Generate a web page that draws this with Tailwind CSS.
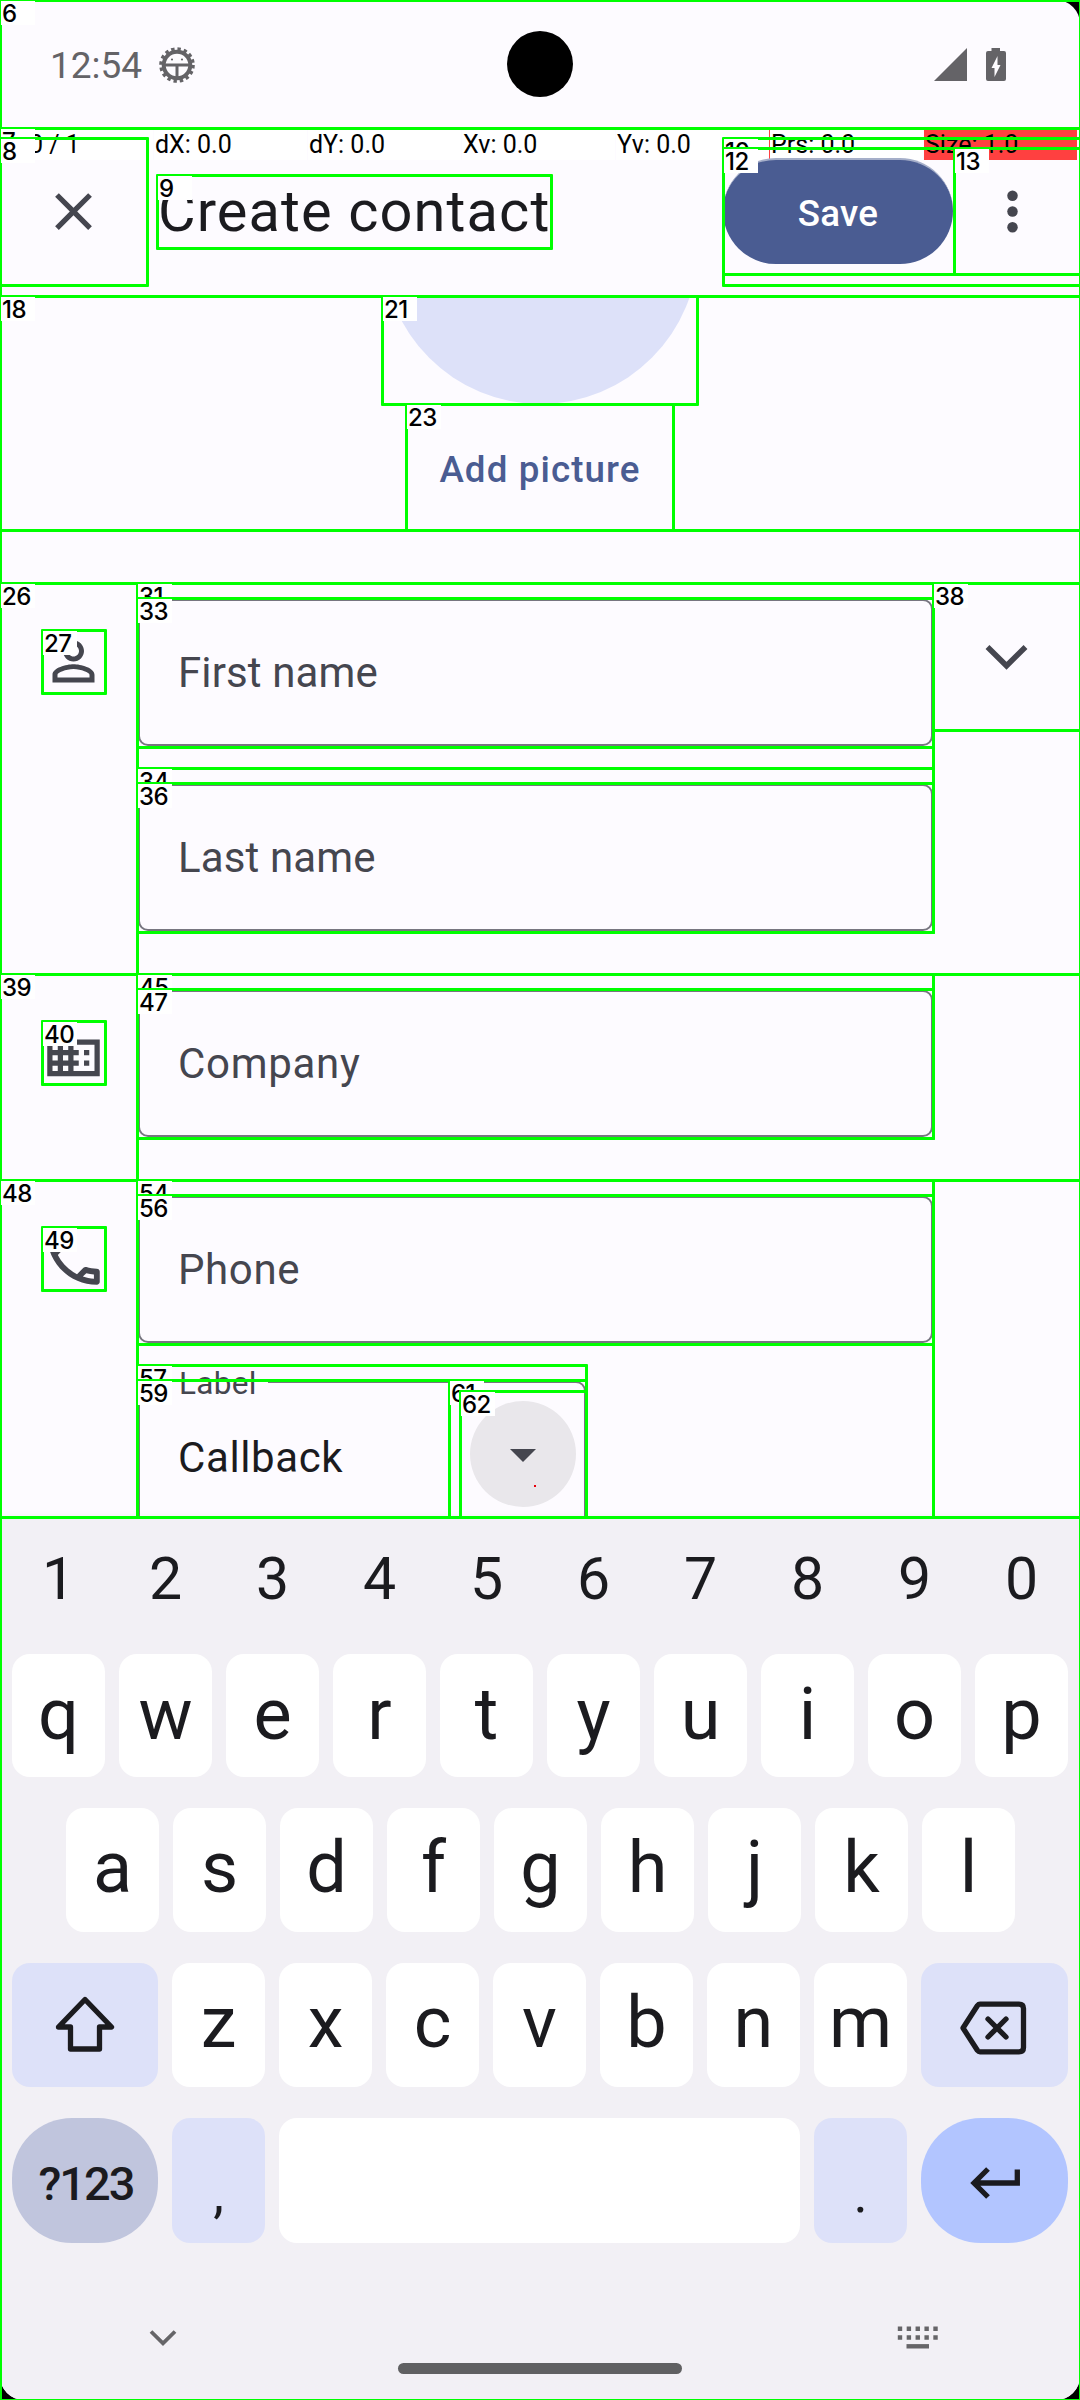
<!DOCTYPE html>
<html lang="en">
<head>
<meta charset="utf-8">
<title>Create contact</title>
<script src="https://cdn.jsdelivr.net/npm/@tailwindcss/browser@4"></script>
</head>
<body class="bg-black font-[Roboto,sans-serif] text-[#1b1b1f]">
<div class="relative w-[1080px] h-[2400px] overflow-hidden">
<div class="flex flex-col w-[1080px] h-[2400px] overflow-hidden rounded-[24px] bg-[#fdfbff]">

  <!-- Status bar -->
  <header class="relative flex h-[129px] shrink-0 items-center justify-between pl-[50px] pr-[74px] text-[#646367]">
    <div class="flex items-center gap-[17px]">
      <span class="w-[92px] whitespace-nowrap text-[37px] leading-[40px] pt-[3px]">12:54</span>
      <svg class="size-9" viewBox="-18 -18 36 36">
        <circle r="13.3" fill="none" stroke="currentColor" stroke-width="4"/>
        <circle r="16.2" fill="none" stroke="currentColor" stroke-width="3.2" stroke-dasharray="3.4 2.96"/>
        <path d="M-12 0H12M0 0V13" stroke="currentColor" stroke-width="3"/>
        <circle cx="-5" cy="-5.5" r="1.1" fill="currentColor"/><circle cx="5" cy="-5.5" r="1.1" fill="currentColor"/>
      </svg>
    </div>
    <div class="absolute left-[507px] top-[31px] size-[66px] rounded-full bg-black"></div>
    <div class="flex items-center gap-[19px]">
      <svg class="h-[33px] w-[33px]" viewBox="0 0 33 33"><path d="M0 33L33 0V33Z" fill="currentColor"/></svg>
      <svg class="h-[33px] w-5" viewBox="0 0 20 33"><path d="M5.500 0h8.500v3h4q2 0 2 2v26q0 2-2 2H2q-2 0-2-2V5q0-2 2-2h3.500z" fill="currentColor"/><path d="M11.500 8v9h3L8.500 29v-9H5.500z" fill="#fdfbff"/></svg>
    </div>
  </header>

  <!-- Pointer readout -->
  <div class="grid h-[31px] shrink-0 grid-cols-[repeat(7,153px)] gap-px text-[25px] leading-[32px] text-black *:h-[31px] *:bg-white *:pl-px *:whitespace-pre">
    <div>P: 0 / 1</div><div>dX: 0.0</div><div>dY: 0.0</div><div>Xv: 0.0</div><div>Yv: 0.0</div>
    <div class="shadow-[-1px_0_0_#ff4040]">Prs: 0.0</div><div class="bg-[#ff4040]!">Size: 1.0</div>
  </div>

  <!-- App bar -->
  <div class="flex h-[137px] shrink-0 items-start pl-[42px] text-[#45464f]">
    <svg class="mt-5 size-[63px]" viewBox="0 0 24 24" fill="currentColor"><path d="M19 6.410L17.590 5 12 10.590 6.410 5 5 6.410 10.590 12 5 17.590 6.410 19 12 13.410 17.590 19 19 17.590 13.410 12z"/></svg>
    <h1 class="ml-[53px] mt-[17px] w-[565px] whitespace-nowrap text-[57.750px] leading-[68px] tracking-[1.100px] text-[#1b1b1f]">Create contact</h1>
    <div class="-mt-[2px] flex h-[106px] w-[230px] items-center justify-center rounded-full border-t-2 border-[#a5aec9] bg-[#4a5c92] pt-[3px] text-[36.750px] font-medium tracking-[0.300px] text-white">Save</div>
    <svg class="ml-[28px] mt-5 size-[63px]" viewBox="0 0 24 24" fill="currentColor"><circle cx="12" cy="6" r="2"/><circle cx="12" cy="12" r="2"/><circle cx="12" cy="18" r="2"/></svg>
  </div>

  <!-- Photo -->
  <section class="flex h-[287px] shrink-0 flex-col items-center">
    <div class="flex h-[107px] items-end overflow-hidden"><div class="size-[315px] shrink-0 rounded-full bg-[#dde1f9]"></div></div>
    <div class="mt-[42px] text-[36.750px] leading-[48px] font-medium tracking-[1.100px] text-[#4a5c92]">Add picture</div>
  </section>

  <!-- Form -->
  <main class="flex h-[934px] shrink-0 flex-col overflow-hidden pt-[15px] text-[42px] text-[#45464f]">
    <section class="flex h-[391px] shrink-0 pl-[42px]">
      <svg class="mt-[31px] size-[63px]" viewBox="0 0 24 24" fill="currentColor"><path d="M12 5.900c1.160 0 2.100.94 2.100 2.100s-.94 2.100-2.100 2.100S9.900 9.160 9.900 8s.94-2.100 2.100-2.100m0 9c2.970 0 6.100 1.460 6.100 2.100v1.100H5.900V17c0-.64 3.130-2.100 6.100-2.100M12 4C9.790 4 8 5.790 8 8s1.790 4 4 4 4-1.790 4-4-1.790-4-4-4zm0 9c-2.670 0-8 1.340-8 4v3h16v-3c0-2.660-5.330-4-8-4z"/></svg>
      <div class="ml-[33px] flex w-[795px] flex-col gap-[38px]">
        <div class="flex h-[147px] items-center rounded-[10px] border-2 border-[#777680] pl-[38px] tracking-[0.120px]">First name</div>
        <div class="flex h-[147px] items-center rounded-[10px] border-2 border-[#777680] pl-[38px] tracking-[0.120px]">Last name</div>
      </div>
      <svg class="ml-[52px] mt-[45px] h-[26px] w-[43px]" viewBox="0 0 43 26" fill="none" stroke="currentColor" stroke-width="5.500"><path d="M2.500 3L21.500 21.800 40.500 3"/></svg>
    </section>
    <section class="flex h-[206px] shrink-0 pl-[42px]">
      <svg class="mt-[31px] size-[63px]" viewBox="0 0 24 24" fill="currentColor"><path d="M12 7V3H2v18h20V7H12zM6 19H4v-2h2v2zm0-4H4v-2h2v2zm0-4H4V9h2v2zm0-4H4V5h2v2zm4 12H8v-2h2v2zm0-4H8v-2h2v2zm0-4H8V9h2v2zm0-4H8V5h2v2zm10 12h-8v-2h2v-2h-2v-2h2v-2h-2V9h8v10zm-2-8h-2v2h2v-2zm0 4h-2v2h2v-2z"/></svg>
      <div class="ml-[33px] flex h-[147px] w-[795px] items-center rounded-[10px] border-2 border-[#777680] pl-[38px] tracking-[0.700px]">Company</div>
    </section>
    <section class="flex shrink-0 pl-[42px]">
      <svg class="mt-[31px] size-[63px]" viewBox="1.200 1.200 21.600 21.600" fill="currentColor"><path d="M6.540 5c.06.89.21 1.760.45 2.590l-1.200 1.200c-.41-1.200-.67-2.470-.76-3.790h1.510m9.860 12.020c.85.24 1.720.39 2.600.45v1.490c-1.320-.09-2.590-.35-3.800-.75l1.200-1.190M7.500 3H4c-.55 0-1 .45-1 1 0 9.390 7.610 17 17 17 .55 0 1-.45 1-1v-3.490c0-.55-.45-1-1-1-1.240 0-2.450-.2-3.570-.57-.1-.04-.21-.05-.31-.05-.26 0-.51.1-.71.29l-2.200 2.200c-2.830-1.450-5.150-3.760-6.590-6.590l2.200-2.200c.28-.28.36-.67.25-1.020C8.700 6.450 8.500 5.250 8.500 4c0-.55-.45-1-1-1z"/></svg>
      <div class="ml-[33px] flex flex-col gap-[38px]">
        <div class="flex h-[147px] w-[795px] items-center rounded-[10px] border-2 border-[#777680] pl-[38px] tracking-[0.600px]">Phone</div>
        <div class="relative flex h-[147px] w-[448px] items-center justify-between rounded-[10px] border-2 border-[#777680] pl-[38px] pr-[8px] text-[#1b1b1f]">
          <span class="absolute left-[28px] -top-[19px] bg-[#fdfbff] pl-[11px] pr-[11px] text-[31.500px] leading-[40px] tracking-[0.300px] text-[#45464f]">Label</span>
          <span class="pt-[5px] tracking-[0.600px]">Callback</span>
          <span class="relative -mt-[2px] flex size-[106px] items-center justify-center rounded-full bg-[#e9e7eb]">
            <svg class="h-[13px] w-[26px] mt-[3px]" viewBox="0 0 26 13"><path d="M0 0H26L13 13Z" fill="#45464f"/></svg>
            <i class="absolute left-[64px] top-[84px] size-[2px] bg-red-600"></i>
          </span>
        </div>
      </div>
    </section>
  </main>

  <!-- Keyboard -->
  <div class="z-10 flex h-[882px] shrink-0 flex-col bg-[#f2f0f5] px-3 text-[72px] shadow-[0_0_8px_rgba(0,0,0,0.08)]">
    <div class="flex h-[136px] shrink-0 gap-[14px] pt-[25px] text-[59px] leading-[72px] *:w-[93px] *:text-center">
      <span>1</span><span>2</span><span>3</span><span>4</span><span>5</span><span>6</span><span>7</span><span>8</span><span>9</span><span>0</span>
    </div>
    <div class="flex h-[123px] shrink-0 gap-[14px] leading-[121px] *:w-[93px] *:rounded-[18px] *:bg-white *:text-center">
      <span>q</span><span>w</span><span>e</span><span>r</span><span>t</span><span>y</span><span>u</span><span>i</span><span>o</span><span>p</span>
    </div>
    <div class="mt-[31px] flex h-[124px] shrink-0 gap-[14px] pl-[54px] leading-[120px] *:w-[93px] *:rounded-[18px] *:bg-white *:text-center">
      <span>a</span><span>s</span><span>d</span><span>f</span><span>g</span><span>h</span><span>j</span><span>k</span><span>l</span>
    </div>
    <div class="mt-[31px] grid h-[124px] shrink-0 grid-cols-[146px_repeat(7,93px)_147px] grid-rows-[124px] gap-[14px] leading-[120px] text-[#1b1b1f] *:rounded-[18px] *:bg-white *:text-center">
      <span class="flex items-center justify-center bg-[#dde1f9]!"><svg class="size-[60px]" viewBox="0 0 60 60" fill="none" stroke="currentColor" stroke-width="5.300" stroke-linejoin="round"><path d="M30 4.500L56.500 32H44.500V54H15.500V32H3.500Z"/></svg></span>
      <span>z</span><span>x</span><span>c</span><span>v</span><span>b</span><span>n</span><span>m</span>
      <span class="flex items-center justify-center bg-[#dde1f9]!"><svg class="mr-[3px] mt-[5px] h-[54px] w-[68px]" viewBox="0 0 68 54" fill="none" stroke="currentColor" stroke-width="5.300" stroke-linejoin="round" stroke-linecap="round"><path d="M4 27L18.500 4.500Q19.500 3.200 21 3.200H60Q64.500 3.200 64.500 7.500V46.500Q64.500 50.800 60 50.800H21Q19.500 50.800 18.500 49.500ZM29 18L47 36M47 18L29 36"/></svg></span>
    </div>
    <div class="mt-[31px] grid h-[125px] shrink-0 grid-cols-[146px_93px_521px_93px_147px] grid-rows-[125px] gap-[14px] *:rounded-[18px] *:text-center">
      <span class="rounded-[60px]! bg-[#c0c5dd] pl-[2px] text-[47px] leading-[131px] font-medium tracking-[-2px]">?123</span>
      <span class="bg-[#dde1f9] text-[54px] leading-[151px]">,</span>
      <span class="bg-white"></span>
      <span class="bg-[#dde1f9] text-[54px] leading-[151px]">.</span>
      <span class="flex items-center justify-center rounded-[60px]! bg-[#b2c5ff]"><svg class="mt-[5px] h-[32px] w-[52px]" viewBox="0 0 52 32" fill="none" stroke="currentColor" stroke-width="5.300"><path d="M19 2L5 16 19 30M5 16H48.300V2.500"/></svg></span>
    </div>
    <div class="grid h-[157px] grid-cols-[386px_284px_1fr] text-[#666568]">
      <svg class="ml-[137px] mt-[86px] h-[18px] w-[28px]" viewBox="0 0 28 18" fill="none" stroke="currentColor" stroke-width="3.800"><path d="M2 2.500L14 14.300 26 2.500"/></svg>
      <div class="mt-[120px] h-[11px] rounded-full bg-[#606062]"></div>
      <svg class="ml-[215px] mt-[83px] h-[24px] w-[42px]" viewBox="0 0 42 24" fill="none" stroke="currentColor" stroke-width="4.400"><path d="M.8 2.700H41.500M.8 11.500H41.500" stroke-dasharray="4.400 4.480"/><path d="M9.500 20.300H32"/></svg>
    </div>
  </div>
</div>

<!-- Numbered element outlines -->
<div id="marks" class="absolute inset-0 z-20 overflow-hidden"></div>
</div>
<script>
const marks = [
  ['',0,0,1080,2400],['6',0,0,1080,128],['7',0,128,1080,296],['8',0,138,147,285],['9',157,175,551,248],
  ['10',723,138,1080,285],['',723,148,1080,274],['12',723,148,954,274],['13',954,148,1080,274],
  ['18',0,296,1080,530],['21',382,296,697,404],['23',406,404,673,530],
  ['26',0,583,1080,974],['27',42,630,105,693],['',137,583,1080,974],['31',137,583,933,768],['33',137,598,933,747],
  ['34',137,768,933,932],['36',137,783,933,932],['38',933,583,1080,730],
  ['39',0,974,1080,1180],['40',42,1021,105,1084],['',137,974,1080,1180],['45',137,974,933,1138],['47',137,989,933,1138],
  ['48',0,1180,1080,1517],['49',42,1227,105,1290],['54',137,1180,933,1517],['56',137,1195,933,1344],
  ['57',137,1365,586,1517],['59',137,1380,449,1517],['61',449,1380,586,1517],['62',460,1391,586,1517]
];
document.getElementById('marks').innerHTML = marks.map(([n,a,b,c,d]) =>
  `<div class="absolute border-3 border-[#00ff00] rounded-[1px]" style="left:${a-1}px;top:${b-1}px;width:${c-a+3}px;height:${d-b+3}px"></div>` +
  (n ? `<div class="absolute h-6 w-[34px] bg-white pl-px font-[Inter,sans-serif] text-[24px] leading-[25px] font-medium tracking-[-0.500px] text-black" style="left:${a+1}px;top:${b+1}px">${n}</div>` : '')
).join('');
</script>
</body>
</html>
